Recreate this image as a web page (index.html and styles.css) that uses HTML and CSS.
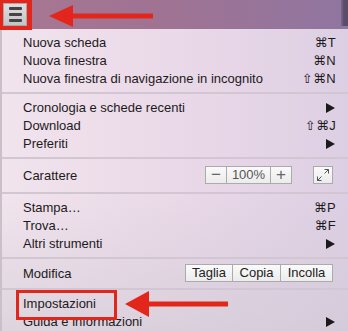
FILE: index.html
```html
<!DOCTYPE html>
<html lang="it">
<head>
<meta charset="utf-8">
<link rel="stylesheet" href="styles.css">
</head>
<body>
<div class="screen">
  <div class="topbar">
    <div class="hl-box">
      <div class="hamburger"><span></span><span></span><span></span></div>
    </div>
    <div class="edge"></div>
    <svg class="arrow arrow-top" width="106" height="24" viewBox="0 0 106 24">
      <polygon points="0,12 24,1 24,9.5 104,9.5 104,14.5 24,14.5 24,23" fill="#e3261c"/>
    </svg>
  </div>
  <div class="menu">
    <div class="row"><span class="label">Nuova scheda</span><span class="sc">⌘T</span></div>
    <div class="row"><span class="label">Nuova finestra</span><span class="sc">⌘N</span></div>
    <div class="row"><span class="label">Nuova finestra di navigazione in incognito</span><span class="sc">⇧⌘N</span></div>
    <div class="sep"></div>
    <div class="row"><span class="label">Cronologia e schede recenti</span><span class="sub"></span></div>
    <div class="row"><span class="label">Download</span><span class="sc">⇧⌘J</span></div>
    <div class="row"><span class="label">Preferiti</span><span class="sub"></span></div>
    <div class="sep"></div>
    <div class="row row-font">
      <span class="label">Carattere</span>
      <div class="controls">
        <div class="btn-group">
          <span class="btn btn-sym">−</span><span class="btn btn-zoom">100%</span><span class="btn btn-sym">+</span>
        </div>
        <span class="btn btn-full">
          <svg width="14" height="14" viewBox="0 0 14 14"><path d="M8.5 1.5h4v4M12.5 1.5L8.5 5.5M5.5 12.5h-4v-4M1.5 12.5l4-4" fill="none" stroke="#555" stroke-width="1"/></svg>
        </span>
      </div>
    </div>
    <div class="sep"></div>
    <div class="row"><span class="label">Stampa…</span><span class="sc">⌘P</span></div>
    <div class="row"><span class="label">Trova…</span><span class="sc">⌘F</span></div>
    <div class="row"><span class="label">Altri strumenti</span><span class="sub"></span></div>
    <div class="sep"></div>
    <div class="row row-edit">
      <span class="label">Modifica</span>
      <div class="btn-group edit">
        <span class="btn btn-edit btn-cut">Taglia</span><span class="btn btn-edit btn-copy">Copia</span><span class="btn btn-edit btn-paste">Incolla</span>
      </div>
    </div>
    <div class="sep"></div>
    <div class="row"><span class="label highlight">Impostazioni</span></div>
    <div class="row"><span class="label">Guida e informazioni</span><span class="sub"></span></div>
    <svg class="arrow arrow-bottom" width="104" height="26" viewBox="0 0 104 26">
      <polygon points="0,13 24,0 24,10.5 103,10.5 103,15.5 24,15.5 24,26" fill="#e3261c"/>
    </svg>
  </div>
</div>
</body>
</html>
```

FILE: styles.css
```css
* { box-sizing: border-box; }
html, body { margin: 0; padding: 0; }
body {
  width: 348px;
  height: 331px;
  overflow: hidden;
  font-family: "Liberation Sans", "DejaVu Sans", sans-serif;
  font-size: 13px;
  color: #1c1a1c;
}
.screen { position: relative; width: 348px; height: 331px; overflow: hidden; }

.topbar {
  position: relative;
  height: 29px;
  display: flex;
  align-items: flex-start;
  background: linear-gradient(90deg, #a87791 0%, #a07393 45%, #9076a0 100%);
}
.hl-box {
  background: #e3261c;
  padding: 3px 5px 4px 3px;
  height: 30px;
  position: relative;
  z-index: 2;
}
.hamburger {
  width: 24px;
  height: 23px;
  background: linear-gradient(180deg, #dedede 0%, #c4c4c4 100%);
  border: 1px solid #a8a8a8;
  display: flex;
  flex-direction: column;
  justify-content: center;
  align-items: center;
  gap: 3px;
}
.hamburger span {
  display: block;
  width: 13px;
  height: 3px;
  background: #444;
  border-radius: 1px;
}
.edge {
  margin-left: auto;
  width: 7px;
  height: 26px;
  background: linear-gradient(90deg, #7a6a8c 0%, #5c4d6c 40%, #5a4a6a 100%);
}
.arrow { position: absolute; display: block; }
.arrow-top { left: 49px; top: 4px; }

.menu {
  position: relative;
  height: 302px;
  padding-top: 4px;
  border-left: 2px solid #c9c0c8;
  background:
    linear-gradient(180deg, rgba(255,255,255,0) 55%, rgba(205,200,210,0.55) 100%),
    linear-gradient(90deg, #f1e4ed 0%, #ead9e8 50%, #ddcfe3 100%);
}
.row {
  height: 18px;
  display: flex;
  align-items: center;
  justify-content: space-between;
  padding-left: 21px;
  padding-right: 12px;
  padding-top: 2px;
  line-height: 16px;
}
.row-font { height: 24px; padding-top: 0; }
.row-edit { height: 20px; padding-top: 0; }
.row-font .label, .row-edit .label { padding-top: 2px; }
.sc {
  font-family: "Liberation Sans", "DejaVu Sans", sans-serif;
  font-size: 13px;
  letter-spacing: 0.3px;
}
.sub {
  width: 0;
  height: 0;
  border-left: 9px solid #1a1a1a;
  border-top: 5px solid transparent;
  border-bottom: 5px solid transparent;
  margin-right: 1px;
}
.sep {
  height: 11px;
  display: flex;
  align-items: center;
}
.sep::before {
  content: "";
  display: block;
  width: 100%;
  height: 2px;
  background: #d3c6d3;
}
.controls {
  display: flex;
  align-items: center;
  gap: 21px;
  margin-right: 3px;
}
.btn-group { display: flex; }
.btn {
  height: 18px;
  display: flex;
  align-items: center;
  justify-content: center;
  background: linear-gradient(180deg, #fafafa 0%, #ececec 100%);
  border: 1px solid #ababab;
  color: #222;
}
.btn-group .btn + .btn { margin-left: -1px; }
.btn-sym { width: 22px; font-size: 17px; color: #666; font-weight: 300; }
.btn-zoom { width: 45px; font-size: 13px; color: #555; }
.btn-full { width: 20px; }
.edit { margin-right: 3px; }
.btn-edit { font-size: 13px; padding: 0; }
.btn-cut { width: 48px; }
.btn-copy { width: 49px; }
.btn-paste { width: 53px; }

.highlight { position: relative; }
.highlight::after {
  content: "";
  position: absolute;
  left: -7px;
  top: -6px;
  width: 95px;
  height: 24px;
  border: 3px solid #e3261c;
}
.arrow-bottom { left: 123px; top: 262px; }
```
